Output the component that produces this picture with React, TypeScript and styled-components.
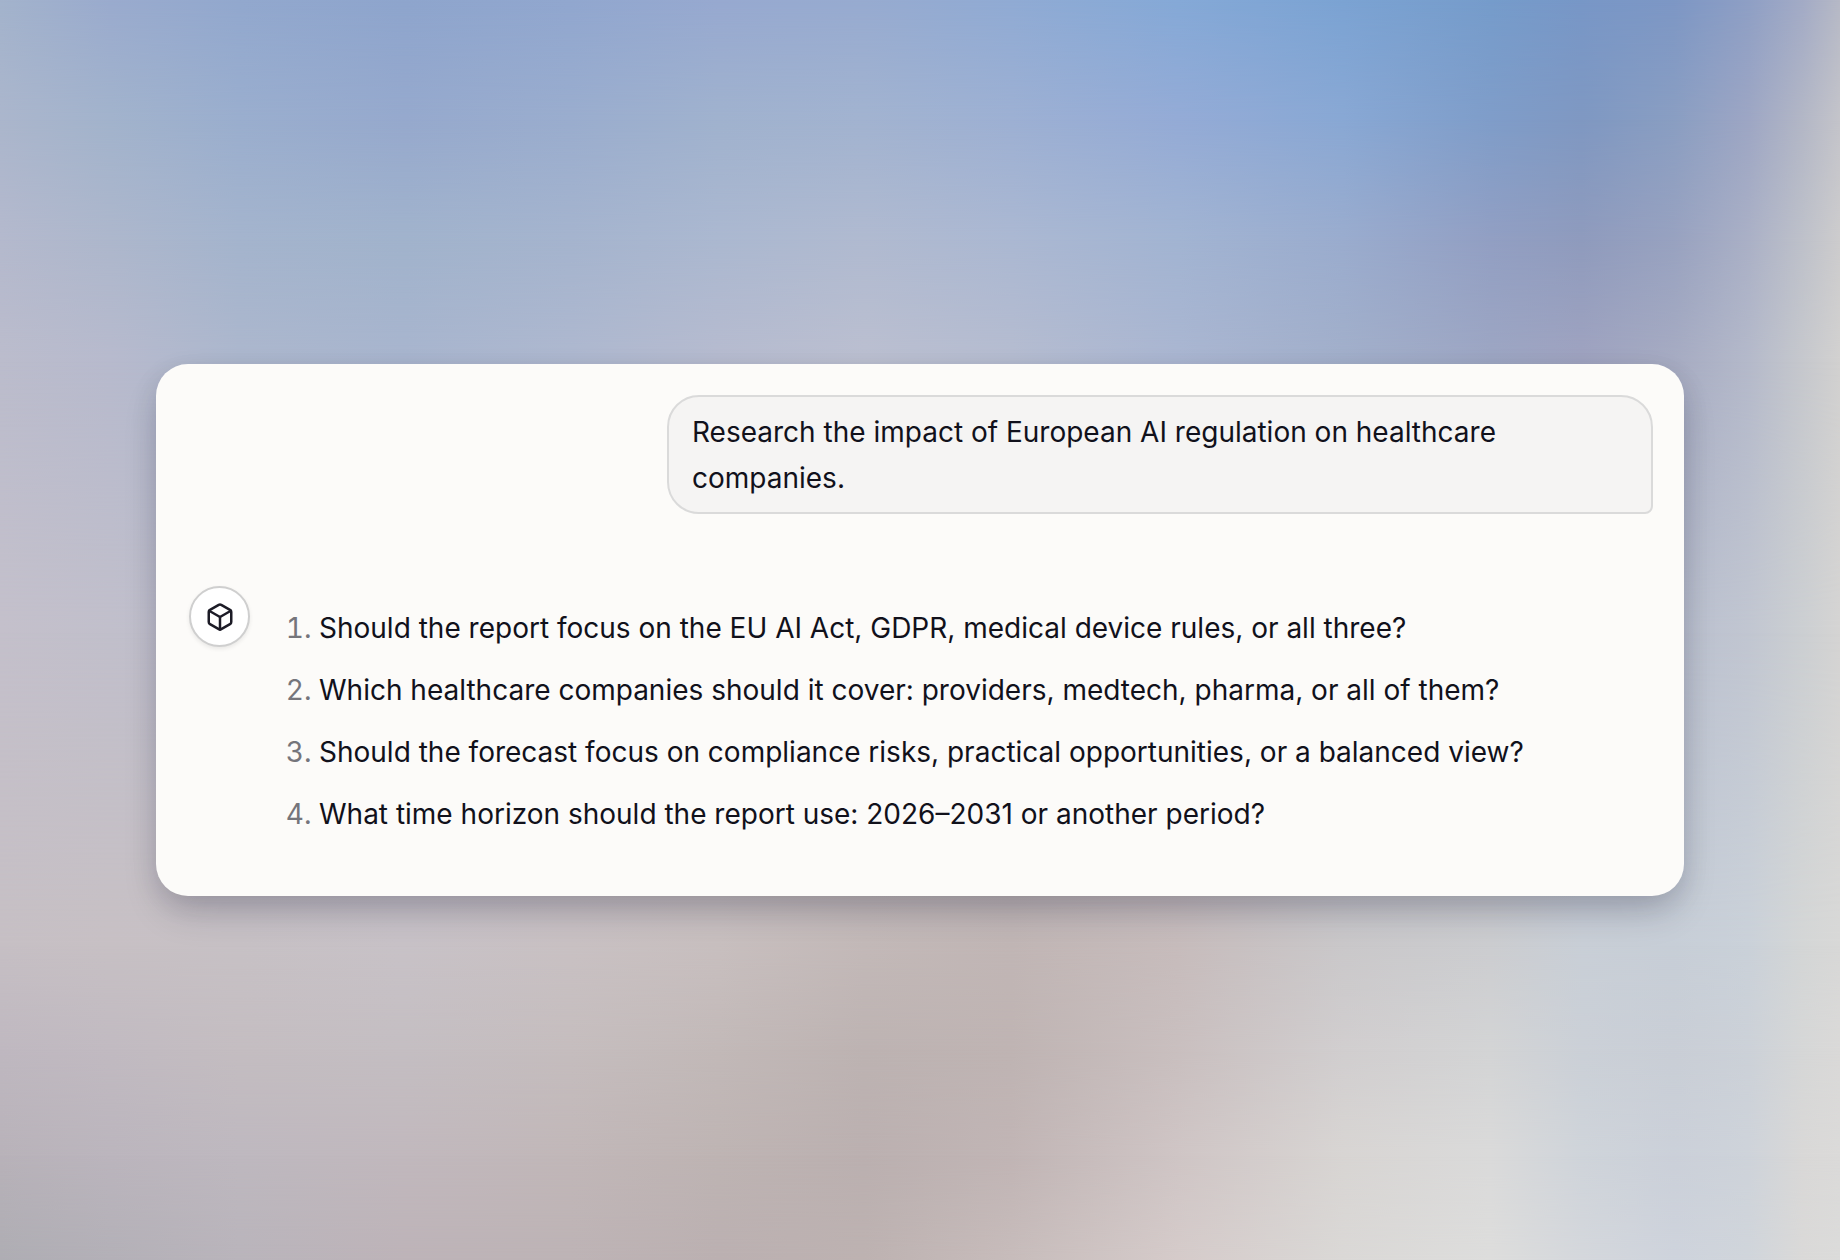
import React from "react";
import styled, { createGlobalStyle } from "styled-components";
import { Box } from "lucide-react";

const GlobalStyle = createGlobalStyle`
  *, *::before, *::after { box-sizing: border-box; }
  body {
    margin: 0;
    font-family: Inter, "Liberation Sans", sans-serif;
    color: #11111b;
  }
`;

/* Colour mesh of the backdrop: each row blends downwards into the next one. */
const meshColumns = [0, 6, 13, 22, 31, 39, 47, 55, 64, 73, 81, 86, 91, 95, 98, 100];

const meshRows: { at: number; colors: string[] }[] = [
  { at: 0, colors: ["#a3b3cc", "#9aabce", "#92a8ce", "#8ea5cd", "#91a7cf", "#97a9d0", "#97abd0", "#90abd4", "#85a9d7", "#7ba3d3", "#769ccb", "#7897c7", "#7d97c5", "#8e9fc5", "#a3abc6", "#b6b9c6"] },
  { at: 9.5, colors: ["#abb6cc", "#a2b3cc", "#9aaece", "#96a9cd", "#9aadce", "#a0b2ce", "#a2b3d0", "#9db0d3", "#94abd6", "#89a8d4", "#7f9dc9", "#7f98c2", "#8a9ec2", "#9da6c4", "#b3b7c6", "#c4c4ca"] },
  { at: 19, colors: ["#b4b9cd", "#adb7cc", "#a4b4cd", "#a1b3cc", "#a5b4ce", "#abb8d0", "#b0bad0", "#abb8d2", "#a2b4d2", "#9aacce", "#929fc3", "#8f9bbd", "#98a2c0", "#aab0c6", "#bec1ca", "#cdcccd"] },
  { at: 28.5, colors: ["#bbbccc", "#b7bacd", "#acb7cd", "#a8b5ce", "#aeb8cf", "#b6bbcf", "#bbbfd0", "#b5bcd0", "#aab6d1", "#a2afca", "#9da6c3", "#9fa3c0", "#a6abc2", "#b4b9ca", "#c6c8cd", "#d2d1d0"] },
  { at: 50, colors: ["#c4c0cb", "#c1bfcb", "#bdbdcc", "#bcbdcd", "#bebfcd", "#c1c0cc", "#c0c0cb", "#bcbecc", "#b8bccc", "#b4baca", "#b2b8c9", "#b4bac9", "#bac0cf", "#c1c6d1", "#cccfd2", "#d5d4d3"] },
  { at: 75, colors: ["#c6bfc4", "#c7c0c4", "#c7c1c5", "#c8c2c7", "#c9c1c3", "#c8bfbf", "#c3b9b8", "#c1b6b5", "#c7bcbc", "#cac8ca", "#cccdd0", "#c9cfd7", "#c7ced7", "#cad1d9", "#d4d6d6", "#d8d8d7"] },
  { at: 83.3, colors: ["#bfb8c0", "#c1bac1", "#c4bdc1", "#c4bec2", "#c5bdbe", "#c2b9b8", "#bdb3b2", "#bfb4b3", "#c9bfbf", "#d1cecf", "#d3d4d5", "#cbd0d7", "#c9ced6", "#ccd1d8", "#d6d7d7", "#dad9d8"] },
  { at: 91.7, colors: ["#b8b2b9", "#bbb5bd", "#beb8bf", "#c1b8bd", "#c1b7b8", "#beb4b3", "#bbb0b0", "#c1b5b5", "#cfc5c5", "#d8d5d3", "#dadada", "#cfd4da", "#cbd0d9", "#ced3da", "#d9d8d7", "#dbdad9"] },
  { at: 100, colors: ["#aeadb3", "#b3b0b7", "#b9b4bb", "#bdb3b8", "#bdb3b5", "#bbb0b1", "#bdb2b1", "#c7bcbb", "#d5cbca", "#dad8d6", "#dddddc", "#d4d7dc", "#ced3dc", "#d0d5db", "#dad9d8", "#dbdbda"] },
];

const Page = styled.main`
  display: grid;
  min-height: 100vh;
`;

const Backdrop = styled.div`
  grid-area: 1 / 1;
  display: grid;
  overflow: hidden;
`;

const MeshLayer = styled.div<{ $from: number; $to: number; $colors: string[] }>`
  grid-area: 1 / 1;
  background: linear-gradient(
    to right,
    ${(p) => p.$colors.map((color, i) => `${color} ${meshColumns[i]}%`).join(", ")}
  );
  mask-image: ${(p) =>
    p.$to === 0 ? "none" : `linear-gradient(to bottom, transparent ${p.$from}%, black ${p.$to}%)`};
`;

const Stage = styled.div`
  grid-area: 1 / 1;
  z-index: 1;
  display: flex;
  align-items: center;
  padding: 48px 156px;
`;

const Card = styled.section`
  flex: 1;
  min-width: 0;
  display: flex;
  flex-direction: column;
  gap: 72px;
  padding: 31px 31px 59px;
  border-radius: 32px;
  background: #fcfbf9;
  box-shadow:
    0 20px 40px -8px rgba(17, 17, 39, 0.2),
    0 8px 28px -2px rgba(17, 17, 39, 0.12);
`;

const UserMessage = styled.p`
  align-self: flex-end;
  width: 986px;
  max-width: 100%;
  margin: 0;
  padding: 12px 23px 11px;
  border: 2px solid #dadada;
  border-radius: 32px 32px 8px 32px;
  background: #f5f4f3;
  font-size: 28px;
  line-height: 46px;
`;

const Reply = styled.div`
  display: flex;
  align-items: flex-start;
  gap: 36px;
  padding-left: 2px;
`;

const Avatar = styled.div`
  flex: none;
  display: grid;
  place-items: center;
  width: 61px;
  height: 61px;
  border: 2px solid #cfcfcf;
  border-radius: 50%;
  background: #ffffff;
  color: #1c1b26;
  box-shadow: 0 2px 4px rgba(0, 0, 0, 0.08);
`;

const Questions = styled.ol`
  flex: 1;
  min-width: 0;
  display: grid;
  gap: 16px;
  margin: 0;
  padding: 19px 0 0 33px;
  font-size: 28px;
  line-height: 46px;
`;

const Question = styled.li`
  &::marker {
    color: #75757b;
  }
`;

const questions = [
  "Should the report focus on the EU AI Act, GDPR, medical device rules, or all three?",
  "Which healthcare companies should it cover: providers, medtech, pharma, or all of them?",
  "Should the forecast focus on compliance risks, practical opportunities, or a balanced view?",
  "What time horizon should the report use: 2026–2031 or another period?",
];

export default function App() {
  return (
    <>
      <GlobalStyle />
      <Page>
        <Backdrop aria-hidden="true">
          {meshRows.map((row, i) => (
            <MeshLayer
              key={row.at}
              $from={i === 0 ? 0 : meshRows[i - 1].at}
              $to={row.at}
              $colors={row.colors}
            />
          ))}
        </Backdrop>
        <Stage>
          <Card>
            <UserMessage>
              Research the impact of European AI regulation on healthcare companies.
            </UserMessage>
            <Reply>
              <Avatar>
                <Box size={30} strokeWidth={2} aria-hidden="true" />
              </Avatar>
              <Questions>
                {questions.map((question) => (
                  <Question key={question}>{question}</Question>
                ))}
              </Questions>
            </Reply>
          </Card>
        </Stage>
      </Page>
    </>
  );
}
